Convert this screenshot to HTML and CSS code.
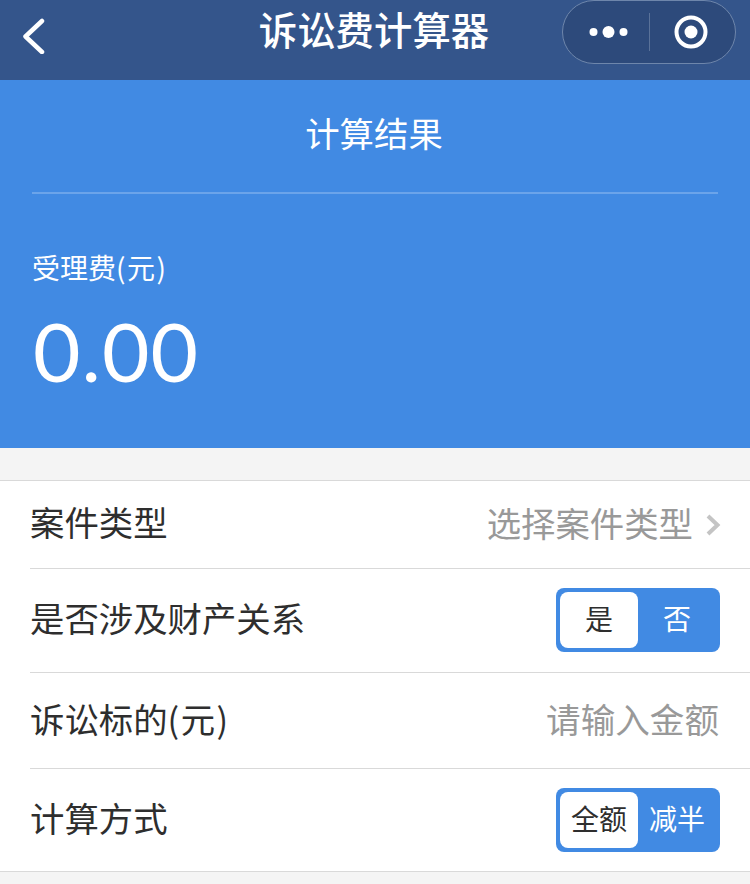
FILE: index.html
```html
<!DOCTYPE html>
<html lang="zh-CN">
  <head>
    <meta charset="UTF-8" />
    <meta name="viewport" content="width=device-width, initial-scale=1.0" />
    <title>诉讼费计算器</title>
    <link rel="stylesheet" href="styles.css">
  </head>
  <body>
    <!-- 顶部导航 -->
    <div class="navbar">
      <svg class="back" width="24" height="36" viewBox="0 0 24 36">
        <path d="M21 3 L4.5 18.5 L21 34" fill="none" stroke="#fff" stroke-width="4.5" stroke-linecap="round" stroke-linejoin="round"/>
      </svg>
      <div class="nav-title">诉讼费计算器</div>
      <div class="capsule">
        <div class="capsule-side">
          <svg width="46" height="16" viewBox="0 0 46 16">
            <circle cx="10.5" cy="8" r="4" fill="#fff"/>
            <circle cx="25.5" cy="8" r="6" fill="#fff"/>
            <circle cx="40.5" cy="8" r="4" fill="#fff"/>
          </svg>
        </div>
        <div class="capsule-line"></div>
        <div class="capsule-side">
          <svg width="36" height="36" viewBox="0 0 36 36">
            <circle cx="17" cy="18" r="14.5" fill="none" stroke="#fff" stroke-width="4"/>
            <circle cx="17" cy="18" r="6.5" fill="#fff"/>
          </svg>
        </div>
      </div>
    </div>

    <!-- 计算结果 -->
    <div class="result">
      <div class="result-title">计算结果</div>
      <div class="result-label">受理费(<span class="unit">元</span>)</div>
      <div class="result-value">0.00</div>
    </div>

    <!-- 表单 -->
    <div class="form">
      <div class="row row-type">
        <span>案件类型</span>
        <div class="picker">
          <span class="muted">选择案件类型</span>
          <svg width="16" height="24" viewBox="0 0 16 24">
            <path d="M3 3 L12.5 12 L3 21" fill="none" stroke="#c4c4c4" stroke-width="4"/>
          </svg>
        </div>
      </div>
      <div class="row row-toggle-a">
        <span>是否涉及财产关系</span>
        <div class="toggle">
          <div class="toggle-item active">是</div>
          <div class="toggle-item">否</div>
        </div>
      </div>
      <div class="row row-amount">
        <span>诉讼标的(<span class="unit">元</span>)</span>
        <span class="muted amount">请输入金额</span>
      </div>
      <div class="row row-toggle-b">
        <span>计算方式</span>
        <div class="toggle">
          <div class="toggle-item active">全额</div>
          <div class="toggle-item">减半</div>
        </div>
      </div>
    </div>
  </body>
</html>
```

FILE: styles.css
```css
* {
  margin: 0;
  padding: 0;
  box-sizing: border-box;
}

body {
  width: 750px;
  height: 884px;
  overflow: hidden;
  background: #f4f4f4;
  font-family: "Noto Sans CJK SC", "Noto Sans", sans-serif;
}

/* 顶部导航 */
.navbar {
  height: 80px;
  display: flex;
  align-items: flex-start;
  position: relative;
  background: #34558b;
  color: #fff;
}

.back {
  margin: 18px 0 0 21px;
}

.nav-title {
  position: absolute;
  top: 4px;
  left: -1px;
  width: 750px;
  text-align: center;
  font-size: 38.4px;
  line-height: 48px;
  font-weight: 500;
}

.capsule {
  position: absolute;
  top: 0;
  left: 562px;
  width: 174px;
  height: 64px;
  display: flex;
  align-items: center;
  background: #2d4a7b;
  border: 1px solid #6e86ab;
  border-radius: 32px;
}

.capsule-side {
  flex: 1;
  display: flex;
  justify-content: center;
  align-items: center;
}

.capsule-line {
  width: 1px;
  height: 38px;
  background: #5a7299;
}

/* 计算结果 */
.result {
  height: 368px;
  padding: 0 32px;
  background: #418ae3;
  color: #fff;
}

.result-title {
  height: 114px;
  padding: 30px 2px 0 0;
  text-align: center;
  font-size: 34.4px;
  line-height: 44px;
  border-bottom: 2px solid #6ba4ea;
}

.result-label {
  margin-top: 53px;
  font-size: 28px;
  line-height: 40px;
}

.result-value {
  margin: 17px 0 0 1px;
  font-family: Lato, "Noto Sans", sans-serif;
  font-size: 82px;
  line-height: 92px;
  letter-spacing: 1px;
}

.unit {
  margin: 0 1.5px;
}

/* 表单 */
.form {
  margin-top: 32px;
  padding-left: 30px;
  background: #fff;
  border-top: 1px solid #d9d9d9;
  border-bottom: 1px solid #d9d9d9;
  font-size: 34.4px;
  color: #2e2e2e;
}

.row {
  display: flex;
  justify-content: space-between;
  align-items: center;
  padding-right: 30px;
  border-bottom: 1px solid #d9d9d9;
}

.row > span {
  position: relative;
  top: -3px;
}

.row:last-child {
  border-bottom: none;
}

.row-type {
  height: 88px;
}

.row-type > span {
  top: -4px;
}

.row-toggle-a {
  height: 104px;
  padding-bottom: 2px;
}

.row-amount {
  height: 96px;
}

.row-toggle-b {
  height: 102px;
}

.picker {
  display: flex;
  align-items: center;
  gap: 12px;
  margin-right: -1px;
}

.picker .muted {
  position: relative;
  top: -3px;
}

.muted {
  color: #999;
}

.amount {
  font-size: 34.6px;
  margin-right: 1px;
}

/* 切换按钮 */
.toggle {
  width: 164px;
  height: 64px;
  display: flex;
  padding: 4px;
  background: #418ae3;
  border-radius: 8px;
  font-size: 28px;
  color: #fff;
}

.toggle-item {
  flex: 1;
  display: flex;
  justify-content: center;
  align-items: center;
  padding-bottom: 4px;
  border-radius: 8px;
}

.toggle-item.active {
  background: #fff;
  color: #2e2e2e;
}
```
